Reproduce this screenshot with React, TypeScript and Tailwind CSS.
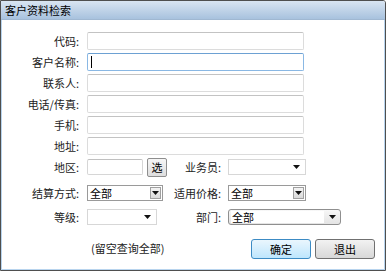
import React from 'react';

const font = { fontFamily: '"Noto Sans CJK SC", "Noto Sans", sans-serif' };

function Arrow() {
    return (
        <svg width="7" height="4" viewBox="0 0 7 4">
            <path d="M0 0 H7 L3.5 4 Z" fill="#111" />
        </svg>
    );
}

function Label({ text, w = 'w-[78px]' }: { text: string; w?: string }) {
    return <div className={`${w} shrink-0 text-right pr-[1px] text-[11px] leading-none text-[#222]`}>{text}</div>;
}

function TextBox({ focused = false }: { focused?: boolean }) {
    return (
        <div
            className={`ml-[7px] w-[217px] h-[18px] rounded-[2px] border bg-white flex items-center ${
                focused ? 'border-[#8ab8e4] border-t-[#6da1d3]' : 'border-[#dcdcdc] border-t-[#c3c3c3]'
            }`}
        >
            {focused && <div className="ml-[3px] w-[1px] h-[12px] bg-black" />}
        </div>
    );
}

function FlatSelect({ w }: { w: string }) {
    return (
        <div className={`${w} h-[16px] border border-[#d7d7d7] bg-white flex items-center justify-end pr-[5px]`}>
            <Arrow />
        </div>
    );
}

function BoxSelect({ w }: { w: string }) {
    return (
        <div className={`${w} h-[16px] border border-[#9a9a9a] bg-white flex items-center`}>
            <span className="flex-1 pl-[2px] text-[11px] leading-none text-black">全部</span>
            <div className="w-[11px] h-[12px] mr-[1px] border border-[#a0a0a0] bg-linear-to-b from-[#f4f4f4] to-[#d9d9d9] flex items-center justify-center">
                <Arrow />
            </div>
        </div>
    );
}

function Row({ label, focused }: { label: string; focused?: boolean }) {
    return (
        <div className="flex items-center h-[18px]">
            <Label text={label} />
            <TextBox focused={focused} />
        </div>
    );
}

export default function App() {
    return (
        <div className="w-[388px] h-[272px] bg-white" style={font}>
            <div className="w-[386px] h-[271px] border border-[#4f4f4f] rounded-tr-[3px] flex flex-col overflow-hidden">
                <div className="h-[19px] shrink-0 bg-linear-to-b from-[#d9e5f2] to-[#a8c2de] border-b border-[#a0b8d2] pl-[4px] text-[11px] leading-[18px] text-black">
                    客户资料检索
                </div>
                <div className="flex-1 border-x border-b border-[#b8d4ee] pt-[12px] flex flex-col gap-[3px]">
                    <Row label="代码:" />
                    <Row label="客户名称:" focused />
                    <Row label="联系人:" />
                    <Row label="电话/传真:" />
                    <Row label="手机:" />
                    <Row label="地址:" />

                    <div className="flex items-center h-[18px]">
                        <Label text="地区:" />
                        <div className="ml-[7px] w-[80px] flex items-center">
                            <div className="w-[56px] h-[16px] border border-[#d6d6d6] border-t-[#c0c0c0] rounded-[2px] bg-white" />
                            <button className="ml-[4px] w-[20px] h-[19px] rounded-[2px] border border-[#8e8e8e] bg-linear-to-b from-[#f6f6f6] to-[#dedede] text-[11px] leading-none text-black">
                                选
                            </button>
                        </div>
                        <Label text="业务员:" w="w-[55px]" />
                        <div className="ml-[6px]">
                            <FlatSelect w="w-[78px]" />
                        </div>
                    </div>

                    <div className="flex items-center h-[16px] mt-[6px]">
                        <Label text="结算方式:" />
                        <div className="ml-[7px] w-[80px]">
                            <BoxSelect w="w-[76px]" />
                        </div>
                        <Label text="适用价格:" w="w-[55px]" />
                        <div className="ml-[6px]">
                            <BoxSelect w="w-[78px]" />
                        </div>
                    </div>

                    <div className="flex items-center h-[16px] mt-[5px]">
                        <Label text="等级:" />
                        <div className="ml-[7px] w-[80px]">
                            <FlatSelect w="w-[70px]" />
                        </div>
                        <Label text="部门:" w="w-[55px]" />
                        <div className="ml-[6px] w-[113px] h-[16px] rounded-[3px] border border-[#8f8f8f] bg-linear-to-b from-[#f7f7f7] to-[#e4e4e4] flex items-center">
                            <span className="flex-1 ml-[2px] pl-[1px] bg-white text-[11px] leading-[12px] text-black">全部</span>
                            <div className="w-[16px] flex justify-center">
                                <Arrow />
                            </div>
                        </div>
                    </div>

                    <div className="flex items-start mt-[11px]">
                        <div className="w-[89px] shrink-0" />
                        <div className="pt-[4px] text-[11px] leading-none text-[#222] w-[160px]">(留空查询全部)</div>
                        <button className="w-[60px] h-[20px] rounded-[3px] border border-[#3c8bc4] bg-linear-to-b from-[#eaf6fd] to-[#bee6fd] text-[11px] leading-none text-black">
                            确定
                        </button>
                        <button className="ml-[4px] w-[60px] h-[20px] rounded-[3px] border border-[#707070] bg-linear-to-b from-[#f2f2f2] to-[#d8d8d8] text-[11px] leading-none text-black">
                            退出
                        </button>
                    </div>
                </div>
            </div>
        </div>
    );
}
